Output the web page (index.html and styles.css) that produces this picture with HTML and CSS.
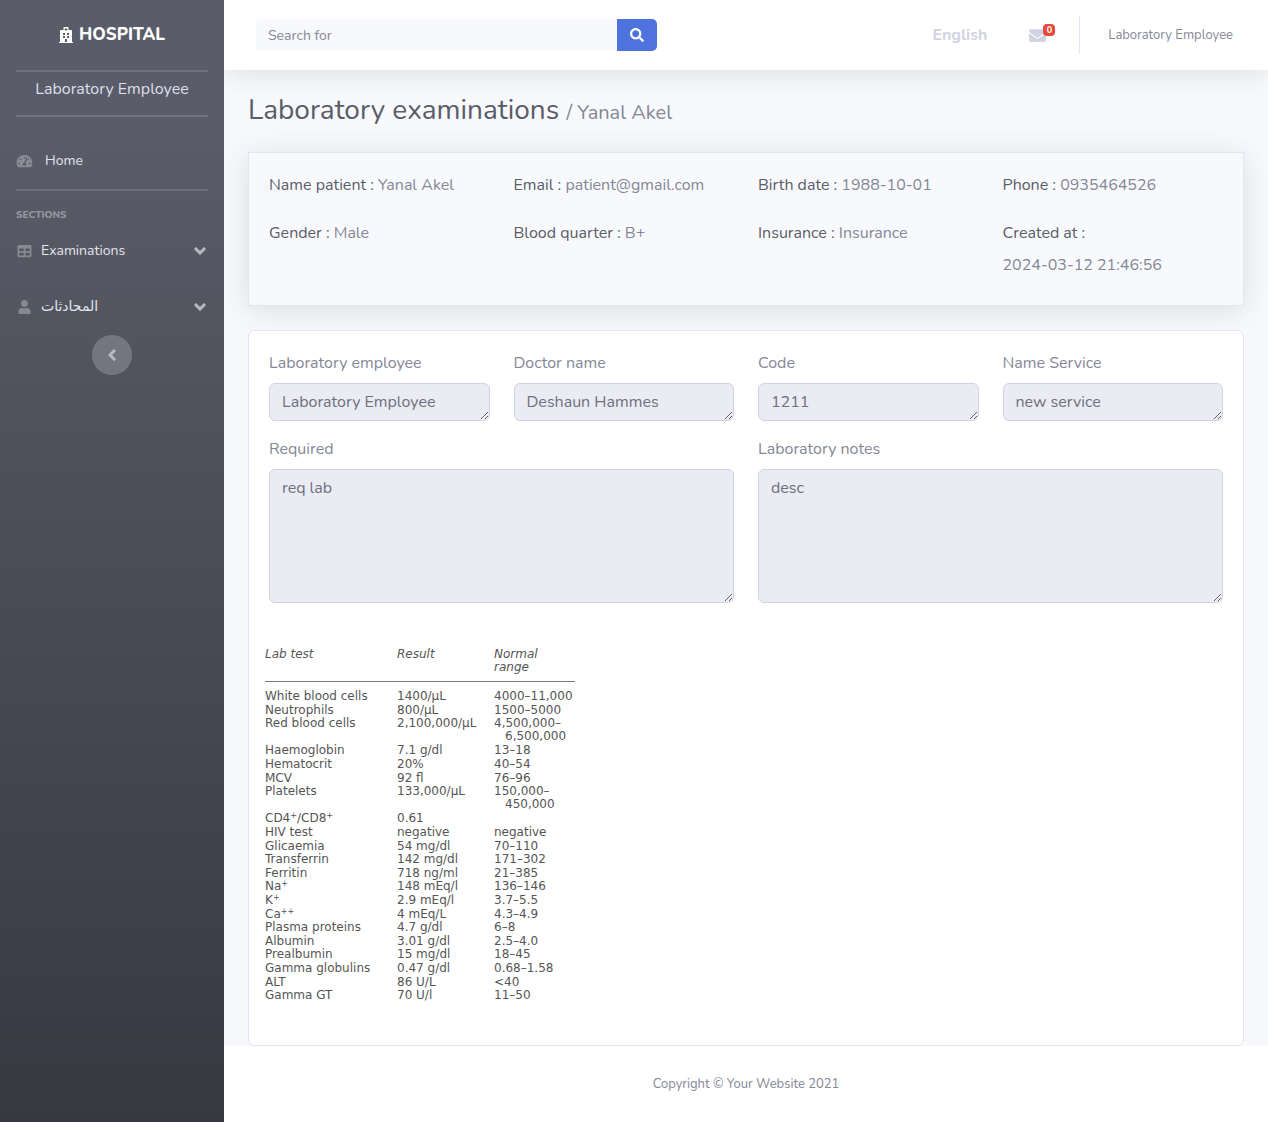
FILE: index.html
```html
<!DOCTYPE html>
<html lang="en">
<head>
<meta charset="utf-8">
<meta name="viewport" content="width=device-width, initial-scale=1">
<title>Laboratory examinations</title>
<link rel="stylesheet" href="styles.css">
</head>
<body>
<div class="wrapper">
  <nav class="sidebar" aria-label="Main">
    <a class="brand" href="#">
      <svg class="brand-icon" viewBox="0 0 448 512" aria-hidden="true"><path d="M448 492v20H0v-20c0-6.627 5.373-12 12-12h20V120c0-13.255 10.745-24 24-24h88V24c0-13.255 10.745-24 24-24h112c13.255 0 24 10.745 24 24v72h88c13.255 0 24 10.745 24 24v360h20c6.627 0 12 5.373 12 12zM308 192h-40c-6.627 0-12 5.373-12 12v40c0 6.627 5.373 12 12 12h40c6.627 0 12-5.373 12-12v-40c0-6.627-5.373-12-12-12zm-168 64h40c6.627 0 12-5.373 12-12v-40c0-6.627-5.373-12-12-12h-40c-6.627 0-12 5.373-12 12v40c0 6.627 5.373 12 12 12zm104 128h-40c-6.627 0-12 5.373-12 12v84h64v-84c0-6.627-5.373-12-12-12zm64-96h-40c-6.627 0-12 5.373-12 12v40c0 6.627 5.373 12 12 12h40c6.627 0 12-5.373 12-12v-40c0-6.627-5.373-12-12-12zm-116 12c0-6.627-5.373-12-12-12h-40c-6.627 0-12 5.373-12 12v40c0 6.627 5.373 12 12 12h40c6.627 0 12-5.373 12-12v-40zM182 96h26v26a6 6 0 0 0 6 6h20a6 6 0 0 0 6-6V96h26a6 6 0 0 0 6-6V70a6 6 0 0 0-6-6h-26V38a6 6 0 0 0-6-6h-20a6 6 0 0 0-6 6v26h-26a6 6 0 0 0-6 6v20a6 6 0 0 0 6 6z"/></svg>
      <span>HOSPITAL</span>
    </a>
    <hr class="divider">
    <div class="role">Laboratory Employee</div>
    <hr class="divider divider-role">
    <a class="nav-link nav-home" href="#">
      <svg class="nav-icon nav-icon-wide" viewBox="0 0 576 512" aria-hidden="true"><path d="M288 32C128.94 32 0 160.94 0 320c0 52.8 14.25 102.26 39.06 144.8 5.61 9.62 16.3 15.2 27.44 15.2h443c11.14 0 21.83-5.58 27.44-15.2C561.75 422.26 576 372.8 576 320c0-159.06-128.94-288-288-288zm0 64c14.71 0 26.58 10.13 30.32 23.65-1.11 2.26-2.64 4.23-3.45 6.67l-9.22 27.67c-5.13 3.49-10.97 6.01-17.64 6.01-17.67 0-32-14.33-32-32S270.33 96 288 96zM96 384c-17.67 0-32-14.33-32-32s14.33-32 32-32 32 14.33 32 32-14.33 32-32 32zm48-160c-17.67 0-32-14.33-32-32s14.33-32 32-32 32 14.33 32 32-14.33 32-32 32zm246.77-72.41l-61.33 184C343.13 347.33 352 364.54 352 384c0 11.72-3.38 22.55-8.88 32H232.88c-5.5-9.45-8.88-20.28-8.88-32 0-33.94 26.5-61.43 59.9-63.59l61.34-184.01c4.17-12.56 17.73-19.45 30.36-15.17 12.57 4.19 19.35 17.79 15.17 30.36zm14.66 57.2l15.52-46.55c3.47-1.29 7.13-2.23 11.05-2.23 17.67 0 32 14.33 32 32s-14.33 32-32 32c-11.38-.01-20.89-6.28-26.57-15.22zM480 384c-17.67 0-32-14.33-32-32s14.33-32 32-32 32 14.33 32 32-14.33 32-32 32z"/></svg>
      <span>Home</span>
    </a>
    <hr class="divider">
    <div class="heading">SECTIONS</div>
    <a class="nav-link" href="#">
      <svg class="nav-icon" viewBox="0 0 512 512" aria-hidden="true"><path d="M464 32H48C21.49 32 0 53.49 0 80v352c0 26.51 21.49 48 48 48h416c26.51 0 48-21.49 48-48V80c0-26.51-21.49-48-48-48zM224 416H64v-96h160v96zm0-160H64v-96h160v96zm224 160H288v-96h160v96zm0-160H288v-96h160v96z"/></svg>
      <span>Examinations</span>
      <svg class="chevron" viewBox="0 0 12 8" aria-hidden="true"><path d="M2 2l4 4 4-4"/></svg>
    </a>
    <a class="nav-link" href="#">
      <svg class="nav-icon" viewBox="-32 0 512 512" aria-hidden="true"><path d="M224 256c70.7 0 128-57.3 128-128S294.7 0 224 0 96 57.3 96 128s57.3 128 128 128zm89.600 32h-16.700c-22.200 10.200-46.900 16-72.900 16s-50.600-5.800-72.900-16h-16.700C60.200 288 0 348.200 0 422.400V464c0 26.500 21.500 48 48 48h352c26.500 0 48-21.500 48-48v-41.600c0-74.200-60.200-134.400-134.400-134.400z"/></svg>
      <span lang="ar">المحادثات</span>
      <svg class="chevron" viewBox="0 0 12 8" aria-hidden="true"><path d="M2 2l4 4 4-4"/></svg>
    </a>
    <button class="toggle" type="button" aria-label="Toggle sidebar">
      <svg class="toggle-icon" viewBox="0 0 8 12" aria-hidden="true"><path d="M6 2L2 6l4 4"/></svg>
    </button>
  </nav>

  <div class="page">
    <header class="topbar">
      <form class="search" role="search">
        <input class="search-input" type="search" placeholder="Search for" aria-label="Search for">
        <button class="search-button" type="button" aria-label="Search">
          <svg viewBox="0 0 512 512" aria-hidden="true"><path d="M505 442.700L405.300 343c-4.500-4.500-10.600-7-17-7H372c27.600-35.300 44-79.700 44-128C416 93.100 322.900 0 208 0S0 93.100 0 208s93.100 208 208 208c48.300 0 92.700-16.400 128-44v16.300c0 6.400 2.500 12.500 7 17l99.700 99.700c9.400 9.400 24.600 9.400 33.900 0l28.300-28.300c9.400-9.400 9.400-24.600.1-34zM208 336c-70.700 0-128-57.200-128-128 0-70.700 57.200-128 128-128 70.700 0 128 57.200 128 128 0 70.700-57.200 128-128 128z"/></svg>
        </button>
      </form>
      <div class="topbar-menu">
        <a class="language" href="#">English</a>
        <a class="messages" href="#" aria-label="Messages">
          <svg viewBox="0 0 512 512" aria-hidden="true"><path d="M502.300 190.800c3.900-3.100 9.700-.2 9.700 4.700V400c0 26.500-21.500 48-48 48H48c-26.500 0-48-21.500-48-48V195.600c0-5 5.700-7.800 9.700-4.700 22.400 17.400 52.100 39.500 154.100 113.600 21.100 15.400 56.700 47.800 92.200 47.600 35.700.3 72-32.800 92.300-47.600 102-74.100 131.600-96.300 154-113.700zM256 320c23.200.4 56.600-29.200 73.400-41.400 132.700-96.300 142.800-104.700 173.400-128.700 5.800-4.500 9.200-11.500 9.200-18.900v-19c0-26.500-21.500-48-48-48H48c-26.500 0-48 21.500-48 48v19c0 7.400 3.400 14.300 9.200 18.900 30.600 23.900 40.700 32.400 173.400 128.700 16.800 12.200 50.200 41.800 73.400 41.400z"/></svg>
          <span class="badge">0</span>
        </a>
        <a class="account" href="#">Laboratory Employee</a>
      </div>
    </header>

    <main class="content">
      <h1 class="title">Laboratory examinations <small>/ Yanal Akel</small></h1>

      <section class="card patient">
        <dl class="facts">
          <div class="fact"><dt>Name patient :</dt> <dd>Yanal Akel</dd></div>
          <div class="fact"><dt>Email :</dt> <dd>patient@gmail.com</dd></div>
          <div class="fact"><dt>Birth date :</dt> <dd>1988-10-01</dd></div>
          <div class="fact"><dt>Phone :</dt> <dd>0935464526</dd></div>
          <div class="fact"><dt>Gender :</dt> <dd>Male</dd></div>
          <div class="fact"><dt>Blood quarter :</dt> <dd>B+</dd></div>
          <div class="fact"><dt>Insurance :</dt> <dd>Insurance</dd></div>
          <div class="fact"><dt>Created at :</dt> <dd>2024-03-12 21:46:56</dd></div>
        </dl>
      </section>

      <section class="card report">
        <form class="fields">
          <div class="field"><label for="employee">Laboratory employee</label><textarea id="employee" rows="1" readonly>Laboratory Employee</textarea></div>
          <div class="field"><label for="doctor">Doctor name</label><textarea id="doctor" rows="1" readonly>Deshaun Hammes</textarea></div>
          <div class="field"><label for="code">Code</label><textarea id="code" rows="1" readonly>1211</textarea></div>
          <div class="field"><label for="service">Name Service</label><textarea id="service" rows="1" readonly>new service</textarea></div>
          <div class="field field-wide"><label for="required">Required</label><textarea id="required" rows="5" readonly>req lab</textarea></div>
          <div class="field field-wide"><label for="notes">Laboratory notes</label><textarea id="notes" rows="5" readonly>desc</textarea></div>
        </form>

        <table class="lab">
          <thead>
            <tr><th scope="col">Lab test</th><th scope="col">Result</th><th scope="col">Normal<br>range</th></tr>
          </thead>
          <tbody>
            <tr><td>White blood cells</td><td>1400/μL</td><td>4000–11,000</td></tr>
            <tr><td>Neutrophils</td><td>800/μL</td><td>1500–5000</td></tr>
            <tr><td>Red blood cells</td><td>2,100,000/μL</td><td>4,500,000–<span class="range-end">6,500,000</span></td></tr>
            <tr><td>Haemoglobin</td><td>7.1 g/dl</td><td>13–18</td></tr>
            <tr><td>Hematocrit</td><td>20%</td><td>40–54</td></tr>
            <tr><td>MCV</td><td>92 fl</td><td>76–96</td></tr>
            <tr><td>Platelets</td><td>133,000/μL</td><td>150,000–<span class="range-end">450,000</span></td></tr>
            <tr><td>CD4<sup>+</sup>/CD8<sup>+</sup></td><td>0.61</td><td></td></tr>
            <tr><td>HIV test</td><td>negative</td><td>negative</td></tr>
            <tr><td>Glicaemia</td><td>54 mg/dl</td><td>70–110</td></tr>
            <tr><td>Transferrin</td><td>142 mg/dl</td><td>171–302</td></tr>
            <tr><td>Ferritin</td><td>718 ng/ml</td><td>21–385</td></tr>
            <tr><td>Na<sup>+</sup></td><td>148 mEq/l</td><td>136–146</td></tr>
            <tr><td>K<sup>+</sup></td><td>2.9 mEq/l</td><td>3.7–5.5</td></tr>
            <tr><td>Ca<sup>++</sup></td><td>4 mEq/L</td><td>4.3–4.9</td></tr>
            <tr><td>Plasma proteins</td><td>4.7 g/dl</td><td>6–8</td></tr>
            <tr><td>Albumin</td><td>3.01 g/dl</td><td>2.5–4.0</td></tr>
            <tr><td>Prealbumin</td><td>15 mg/dl</td><td>18–45</td></tr>
            <tr><td>Gamma globulins</td><td>0.47 g/dl</td><td>0.68–1.58</td></tr>
            <tr><td>ALT</td><td>86 U/L</td><td>&lt;40</td></tr>
            <tr><td>Gamma GT</td><td>70 U/l</td><td>11–50</td></tr>
          </tbody>
        </table>
      </section>
    </main>

    <footer class="footer">Copyright © Your Website 2021</footer>
  </div>
</div>
</body>
</html>
```
FILE: styles.css
```css
* {
  box-sizing: border-box;
}

body {
  margin: 0;
  font-family: Nunito, Lato, "DejaVu Sans", sans-serif;
  font-size: 16px;
  line-height: 24px;
  color: #858796;
  background: #f8f9fc;
}

a {
  color: inherit;
  text-decoration: none;
}

.wrapper {
  display: flex;
  min-height: 100vh;
}

/* Sidebar */
.sidebar {
  position: relative;
  z-index: 1;
  flex: none;
  display: flex;
  flex-direction: column;
  width: 224px;
  background: linear-gradient(180deg, #5a5c69 10%, #373840 100%);
}

.brand {
  display: flex;
  align-items: center;
  justify-content: center;
  gap: 6px;
  height: 70px;
  color: #fff;
  font-size: 17px;
  font-weight: 800;
}

.brand-icon {
  width: 14px;
  height: 16px;
  fill: currentColor;
}

.divider {
  width: calc(100% - 32px);
  height: 2px;
  margin: 0 16px;
  border: 0;
  background: rgba(255, 255, 255, 0.13);
}

.role {
  padding: 5px 16px 14px;
  text-align: center;
  color: #dddfeb;
}

.divider-role {
  margin-bottom: 16px;
}

.nav-link {
  display: flex;
  align-items: center;
  gap: 8px;
  height: 56px;
  padding: 0 18px 0 16px;
  font-size: 14px;
  color: #e3e4ea;
}

.nav-home {
  gap: 12px;
}

.nav-icon {
  width: 17px;
  height: 14px;
  fill: rgba(255, 255, 255, 0.3);
}

.chevron {
  width: 12px;
  height: 8px;
  margin-left: auto;
}

.chevron path,
.toggle-icon path {
  fill: none;
  stroke: #b8b9c2;
  stroke-width: 3;
  stroke-linecap: square;
}

.heading {
  padding: 16px 16px 0;
  font-size: 10px;
  line-height: 16px;
  font-weight: 800;
  color: rgba(255, 255, 255, 0.4);
}

.toggle {
  display: grid;
  place-items: center;
  align-self: center;
  width: 40px;
  height: 40px;
  padding: 0;
  border: 0;
  border-radius: 50%;
  background: rgba(255, 255, 255, 0.2);
}

.toggle-icon {
  width: 8px;
  height: 12px;
}

/* Page column */
.page {
  flex: 1;
  min-width: 0;
  display: flex;
  flex-direction: column;
}

.topbar {
  display: flex;
  align-items: center;
  justify-content: space-between;
  height: 70px;
  padding: 0 35px 0 32px;
  background: #fff;
  box-shadow: 0 2px 28px rgba(58, 59, 69, 0.15);
}

.search {
  display: flex;
  flex: 0 1 401px;
}

.search-input {
  flex: 1;
  min-width: 0;
  height: 32px;
  padding: 0 12px;
  border: 0;
  border-radius: 4px 0 0 4px;
  background: #f8f9fc;
  font: inherit;
  font-size: 14px;
  color: #6e707e;
}

.search-input::placeholder {
  color: #858796;
}

.search-button {
  display: grid;
  place-items: center;
  width: 40px;
  height: 32px;
  padding: 0;
  border: 0;
  border-radius: 0 5px 5px 0;
  background: #4e73df;
}

.search-button svg {
  width: 14px;
  height: 14px;
  fill: #fff;
}

.topbar-menu {
  display: flex;
  align-items: center;
}

.language {
  font-weight: 700;
  color: #d1d3e2;
}

.messages {
  position: relative;
  display: flex;
  margin: 0 33px 0 42px;
}

.messages svg {
  width: 17px;
  height: 17px;
  fill: #d1d3e2;
}

.badge {
  position: absolute;
  top: -3px;
  left: 14px;
  width: 12px;
  border-radius: 4px;
  background: #e74a3b;
  color: #fff;
  font-size: 9px;
  line-height: 12px;
  font-weight: 700;
  text-align: center;
}

.account {
  padding-left: 28px;
  border-left: 1px solid #e3e6f0;
  font-size: 13px;
  line-height: 38px;
}

/* Content */
.content {
  flex: 1;
  padding: 23px 24px 0;
}

.title {
  margin: 0 0 22px;
  font-size: 28px;
  line-height: 34px;
  font-weight: 400;
  color: #5a5c69;
}

.title small {
  font-size: 20px;
  color: #858796;
}

.card {
  padding: 20px;
  border: 1px solid #e3e6f0;
}

.facts,
.fields {
  display: grid;
  grid-template-columns: repeat(4, minmax(0, 1fr));
  gap: 16px 24px;
  margin: 0;
}

.patient {
  margin-bottom: 24px;
  background: #f8f9fc;
  box-shadow: 0 4px 28px rgba(58, 59, 69, 0.15);
}

.facts dt,
.facts dd {
  display: inline-block;
  margin: 0 0 8px;
  vertical-align: top;
}

.facts dt {
  color: #5a5c69;
}

.report {
  border-radius: 6px;
  background: #fff;
}

.field label {
  display: block;
  margin-bottom: 8px;
}

.field textarea {
  display: block;
  width: 100%;
  padding: 6px 12px;
  border: 1px solid #d1d3e2;
  border-radius: 6px;
  background: #eaebf3;
  font: inherit;
  color: #6e707e;
  resize: vertical;
  overflow: hidden;
}

.field-wide {
  grid-column: span 2;
}

/* Lab report */
.lab {
  width: 310px;
  height: 355px;
  margin: 45px 0 22px -4px;
  border-collapse: collapse;
  table-layout: fixed;
  font-family: "DejaVu Sans", sans-serif;
  font-size: 12px;
  line-height: 13px;
  white-space: nowrap;
  color: #555;
}

.lab th,
.lab td {
  padding: 0;
  text-align: left;
  vertical-align: top;
}

.lab th {
  height: 33px;
  font-weight: 400;
  font-style: italic;
  border-bottom: 1px solid #777;
}

.lab th:nth-child(1) {
  width: 132px;
}

.lab th:nth-child(2) {
  width: 97px;
}

.lab tbody tr:first-child td {
  padding-top: 8px;
}

.lab sup {
  font-size: 8px;
  line-height: 1;
  vertical-align: top;
}

.range-end {
  display: block;
  padding-left: 11px;
}

.footer {
  padding: 26px 24px;
  background: #fff;
  font-size: 13px;
  text-align: center;
}
```
